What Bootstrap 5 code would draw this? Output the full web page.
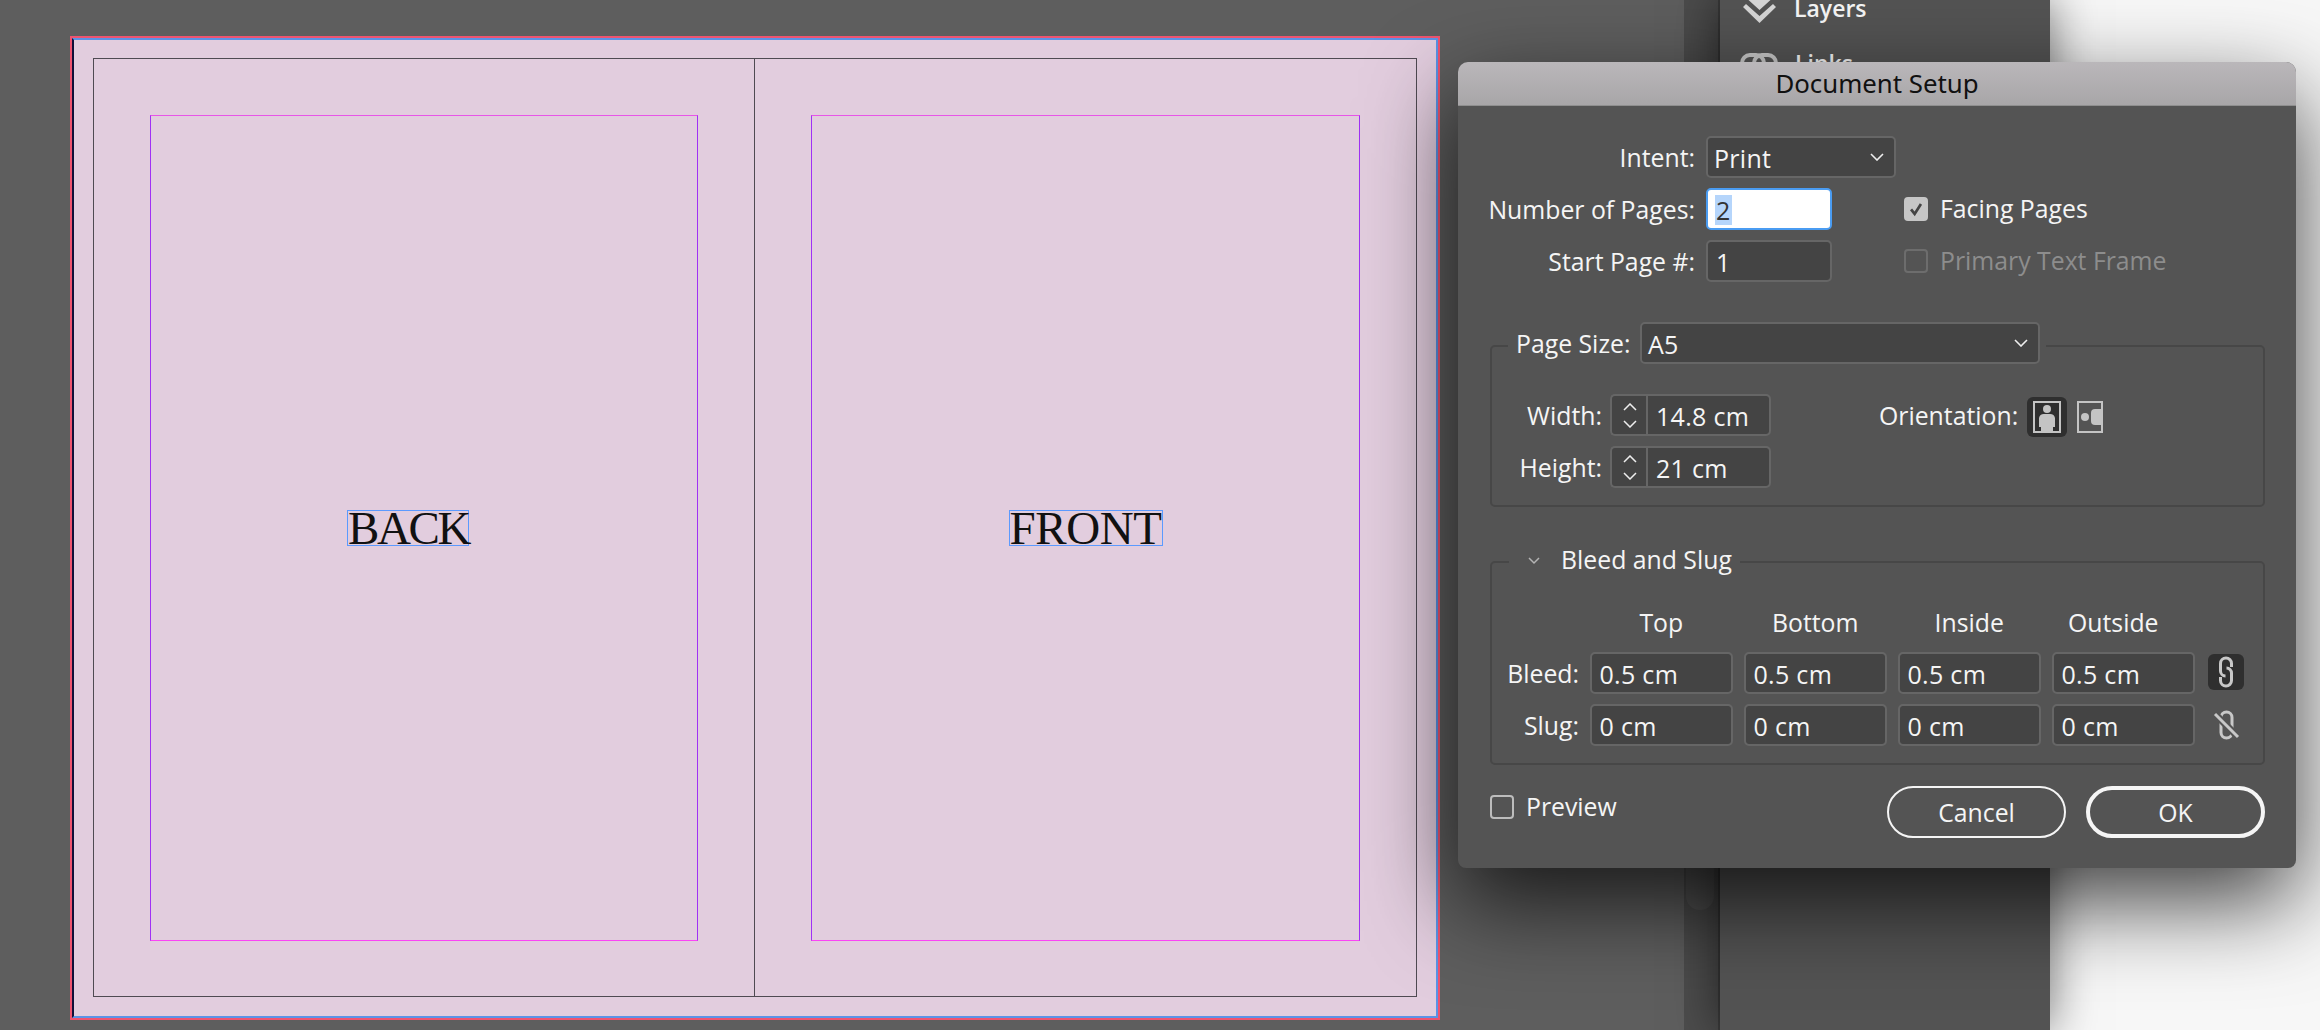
<!DOCTYPE html>
<html lang="en">
<head>
  <meta charset="UTF-8">
  <meta name="viewport" content="width=device-width, initial-scale=1.0">
  <title>Document Setup</title>
  <link href="https://cdn.jsdelivr.net/npm/bootstrap@5.3.0/dist/css/bootstrap.min.css" rel="stylesheet">
  <script src="https://cdn.jsdelivr.net/npm/bootstrap@5.3.0/dist/js/bootstrap.bundle.min.js"></script>
  <style>
    html, body { width: 2320px; height: 1030px; overflow: hidden; }
    body { background: #f7f7f7; font-family: "Open Sans", "Liberation Sans", sans-serif; font-size: 24.8px; color: #f5f5f5; position: relative; }

    /* document window */
    .doc-area { width: 1684px; height: 1030px; background: #5e5e5e; padding: 36px 0 0 70px; flex: none; }
    .spread-bleed { width: 1370px; height: 984px; border: 2px solid #ee5470; }
    .spread-trim { height: 100%; background: #e2cdde; border: 2px solid #5b93e6; border-left-color: #10103a; padding: 18px 19px 19px 19px; }
    .spread-pages { height: 100%; border: 1px solid #4f4a52; display: grid; grid-template-columns: 660px 662px; }
    .spread-half { padding: 56px 56px 55px 56px; }
    .spread-half + .spread-half { border-left: 1px solid #4f4a52; }
    .margin-box { height: 100%; border: 1px solid #a030f5; border-top-color: #e855e8; border-bottom-color: #fb45f5; }
    .text-frame { font-family: "Liberation Serif", serif; font-size: 47px; line-height: 34px; height: 36px; border: 1px solid #5b9aff; color: #111; white-space: nowrap; }
    .frame-back { width: 122px; margin-right: 32px; letter-spacing: -2.4px; }
    .frame-front { width: 154px; letter-spacing: -.4px; }

    /* right side panels */
    .scroll-strip { width: 36px; height: 1030px; background: #4c4c4c; border-right: 2px solid #3c3c3c; padding-top: 200px; flex: none; }
    .scroll-thumb { width: 28px; height: 710px; margin-left: 2px; background: #565656; border-radius: 0 0 14px 14px; }
    .side-panel { width: 330px; height: 1030px; background: #535353; box-shadow: 0 0 44px rgba(0, 0, 0, .55); padding: 0 0 0 23px; flex: none; position: relative; }
    .panel-row { height: 30px; gap: 18px; font-weight: 600; font-size: 23px; }
    .panel-row-layers { margin-top: -7px; }
    .panel-row-links { margin-top: 25px; margin-left: -3px; gap: 17px; }

    /* dialog */
    .setup-dialog { left: 1458px; top: 62px; width: 838px; height: 806px; background: #545454; border-radius: 10px 10px 8px 8px; box-shadow: 0 34px 90px rgba(0, 0, 0, .74); }
    .setup-title { height: 44px; background: linear-gradient(#bab7ba, #a8a6a8); border-bottom: 1px solid #8f8f8f; border-radius: 10px 10px 0 0; color: #111; font-family: "Noto Sans", sans-serif; font-size: 25.8px; line-height: 43px; }
    .setup-body { padding: 30px 31px 30px 32px; }
    .top-grid { display: grid; grid-template-columns: 216px 198px 1fr; grid-template-rows: repeat(3, 42px); row-gap: 10px; }
    .field-label { padding-right: 11px; white-space: nowrap; }
    .field-label, .row-label { padding-top: 2px; }

    .dlg-field.form-control, .dlg-select.form-select { height: 42px; min-height: 0; padding: 0 8px; background-color: #444; border: 2px solid #666; border-radius: 5px; color: #f5f5f5; font-size: 25px; letter-spacing: .3px; line-height: 40px; box-shadow: none; white-space: nowrap; }
    .dlg-select.form-select { padding-left: 6px; background-image: url("data:image/svg+xml,%3csvg xmlns='http://www.w3.org/2000/svg' viewBox='0 0 14 8'%3e%3cpath fill='none' stroke='%23eee' stroke-width='1.6' d='M1 1l6 6 6-6'/%3e%3c/svg%3e"); background-size: 14px 8px; background-position: right 10px center; }
    .w-intent { width: 190px; }
    .w-short { width: 126px; }
    .dlg-field.field-focus { background: #fff; border-color: #4a9cf2; color: #333; padding-left: 7px; }
    .sel-text { background: #b5d5fb; display: inline-block; line-height: 30px; padding: 0 1px; }

    .dlg-check.form-check-input { width: 24px; height: 24px; margin: 0; background-color: transparent; border: 2px solid #bdbdbd; border-radius: 4px; box-shadow: none; opacity: 1; flex: none; }
    .dlg-check.form-check-input:checked { background-color: #c6c6c6; border-color: #c6c6c6; background-size: 18px; background-image: url("data:image/svg+xml,%3csvg xmlns='http://www.w3.org/2000/svg' viewBox='0 0 20 20'%3e%3cpath fill='none' stroke='%23444' stroke-width='3' d='M4.5 10.5l4 5 7-11'/%3e%3c/svg%3e"); }
    .dlg-check.form-check-input:disabled { border-color: #6d6d6d; }
    .check-row { gap: 12px; }
    .muted-label { color: #8d8d8d; }

    .setup-group { border: 2px solid #474747; border-radius: 5px; }
    .group-size { margin-top: 63px; height: 162px; }
    .group-bleed { margin-top: 54px; height: 204px; }
    .group-legend { display: flex; width: fit-content; align-items: center; background: #545454; }
    .legend-size { margin: -25px 0 0 16px; height: 41px; padding: 0 6px 0 8px; gap: 9px; }
    .legend-size > span { width: 115px; white-space: nowrap; padding-top: 2px; }
    .w-pagesize { width: 400px; }
    .legend-bleed { margin: -17px 0 0 17px; height: 30px; padding: 0 8px 0 19px; gap: 21px; }
    .legend-bleed > span { margin-top: -2px; white-space: nowrap; }

    .size-rows { display: grid; grid-template-columns: 110px 161px; grid-template-rows: 42px 42px; column-gap: 8px; row-gap: 10px; margin-top: 31px; position: relative; }
    .spin-field { width: 161px; height: 42px; flex-wrap: nowrap; }
    .spin-box { width: 37px; background: #444; border: 2px solid #666; border-right: 0; border-radius: 5px 0 0 5px; gap: 9px; flex: none; }
    .spin-field .dlg-field.form-control { border-radius: 0 5px 5px 0; padding-left: 8px; margin-left: 0; }
    .orient-block { grid-column: 3; grid-row: 1; margin-left: 100px; gap: 9px; }
    .orient-block > span { padding-top: 2px; }
    .orient-on { width: 40px; height: 40px; margin-top: 4px; background: #2f2f2f; border-radius: 6px; }
    .orient-off { margin: 4px 0 0 1px; }

    .bleed-grid { display: grid; grid-template-columns: 87px repeat(4, 143.5px) 36px; grid-template-rows: 34px 42px 42px; column-gap: 10.5px; row-gap: 10px; margin-top: 32px; }
    .col-head { line-height: 28px; text-align: center; }
    .col-outside { padding-right: 20px; }
    .link-cell { width: 36px; margin-left: 2.5px; }
    .link-on { background: #2f2f2f; border-radius: 6px; height: 36px; margin-top: 2px; }

    .footer-row { margin-top: 21px; }
    .preview-row { margin-top: 2px; }
    .dlg-btn.btn { width: 179px; height: 52px; padding: 0; background: transparent; border: 2px solid #f5f5f5; color: #f5f5f5; font-size: 24.8px; line-height: 48px; }
    .dlg-btn.btn-default { border-width: 4px; line-height: 44px; }
    .btn-gap { gap: 20px; }
  </style>
</head>
<body class="d-flex">
  <!-- document window -->
  <div class="doc-area">
    <div class="spread-bleed">
      <div class="spread-trim">
        <div class="spread-pages">
          <div class="spread-half">
            <div class="margin-box d-flex align-items-center justify-content-center">
              <div class="text-frame frame-back">BACK</div>
            </div>
          </div>
          <div class="spread-half">
            <div class="margin-box d-flex align-items-center justify-content-center">
              <div class="text-frame frame-front">FRONT</div>
            </div>
          </div>
        </div>
      </div>
    </div>
  </div>

  <div class="scroll-strip"><div class="scroll-thumb"></div></div>

  <!-- panels -->
  <div class="side-panel">
    <div class="panel-row panel-row-layers d-flex align-items-center">
      <svg width="33" height="32" viewBox="0 0 33 32"><path fill="#d6d6d6" d="M0 3 16.5-6 33 3 16.5 18zM0 15l3-3 13.5 12L30 12l3 3-16.5 16z"/></svg>
      <span>Layers</span>
    </div>
    <div class="panel-row panel-row-links d-flex align-items-center">
      <svg width="38" height="24" viewBox="0 0 38 24" fill="none" stroke="#c8c8c8" stroke-width="4"><rect x="2" y="4" width="22" height="16" rx="8"/><rect x="14" y="4" width="22" height="16" rx="8"/></svg>
      <span>Links</span>
    </div>
  </div>

  <!-- Document Setup dialog -->
  <div class="setup-dialog position-absolute">
    <div class="setup-title text-center">Document Setup</div>
    <div class="setup-body">
      <div class="top-grid">
        <div class="field-label d-flex align-items-center justify-content-end">Intent:</div>
        <div class="form-select dlg-select w-intent">Print</div>
        <div></div>

        <div class="field-label d-flex align-items-center justify-content-end">Number of Pages:</div>
        <div class="form-control dlg-field field-focus w-short"><span class="sel-text">2</span></div>
        <div class="d-flex align-items-center check-row">
          <input class="form-check-input dlg-check" type="checkbox" checked>
          <span>Facing Pages</span>
        </div>

        <div class="field-label d-flex align-items-center justify-content-end">Start Page #:</div>
        <div class="form-control dlg-field w-short">1</div>
        <div class="d-flex align-items-center check-row">
          <input class="form-check-input dlg-check" type="checkbox" disabled>
          <span class="muted-label">Primary Text Frame</span>
        </div>
      </div>

      <div class="setup-group group-size">
        <div class="group-legend legend-size">
          <span>Page Size:</span>
          <div class="form-select dlg-select w-pagesize">A5</div>
        </div>
        <div class="size-rows">
          <div class="row-label d-flex align-items-center justify-content-end">Width:</div>
          <div class="input-group spin-field">
            <div class="spin-box d-flex flex-column align-items-center justify-content-center">
              <svg width="14" height="8" viewBox="0 0 14 8" fill="none" stroke="#eee" stroke-width="1.5"><path d="M1 7l6-6 6 6"/></svg>
              <svg width="14" height="8" viewBox="0 0 14 8" fill="none" stroke="#eee" stroke-width="1.5"><path d="M1 1l6 6 6-6"/></svg>
            </div>
            <div class="form-control dlg-field">14.8 cm</div>
          </div>
          <div class="orient-block d-flex align-items-center">
            <span class="text-nowrap">Orientation:</span>
            <div class="orient-on d-flex align-items-center justify-content-center">
              <svg width="28" height="32" viewBox="0 0 28 32"><rect x="1" y="1" width="26" height="30" fill="none" stroke="#c4c4c4" stroke-width="2"/><circle cx="14" cy="8" r="4" fill="#c4c4c4"/><path fill="#c4c4c4" d="M6 17a5 5 0 0 1 5-4h6a5 5 0 0 1 5 4v9h-2v4H8v-4H6z"/></svg>
            </div>
            <svg class="orient-off" width="26" height="32" viewBox="0 0 26 32"><rect x="1" y="1" width="24" height="30" fill="none" stroke="#c4c4c4" stroke-width="2"/><circle cx="8" cy="16" r="4" fill="#c4c4c4"/><path fill="#c4c4c4" d="M25 8H18a4 4 0 0 0-4 4v8a4 4 0 0 0 4 4h7z"/></svg>
          </div>
          <div class="row-label d-flex align-items-center justify-content-end">Height:</div>
          <div class="input-group spin-field">
            <div class="spin-box d-flex flex-column align-items-center justify-content-center">
              <svg width="14" height="8" viewBox="0 0 14 8" fill="none" stroke="#eee" stroke-width="1.5"><path d="M1 7l6-6 6 6"/></svg>
              <svg width="14" height="8" viewBox="0 0 14 8" fill="none" stroke="#eee" stroke-width="1.5"><path d="M1 1l6 6 6-6"/></svg>
            </div>
            <div class="form-control dlg-field">21 cm</div>
          </div>
        </div>
      </div>

      <div class="setup-group group-bleed">
        <div class="group-legend legend-bleed">
          <svg width="12" height="8" viewBox="0 0 12 8" fill="none" stroke="#b4b4b4" stroke-width="1.5"><path d="M1 1l5 5 5-5"/></svg>
          <span>Bleed and Slug</span>
        </div>
        <div class="bleed-grid">
          <div></div>
          <div class="col-head">Top</div>
          <div class="col-head">Bottom</div>
          <div class="col-head">Inside</div>
          <div class="col-head col-outside">Outside</div>
          <div></div>

          <div class="row-label d-flex align-items-center justify-content-end">Bleed:</div>
          <div class="form-control dlg-field">0.5 cm</div>
          <div class="form-control dlg-field">0.5 cm</div>
          <div class="form-control dlg-field">0.5 cm</div>
          <div class="form-control dlg-field">0.5 cm</div>
          <div class="link-cell link-on d-flex align-items-center justify-content-center">
            <svg width="36" height="36" viewBox="0 0 36 36" fill="none" stroke="#c8c8c8" stroke-width="3"><path d="M23.5 13V9.5a5.5 5.5 0 0 0-11 0V17a5 5 0 0 0 5 5"/><path d="M12.5 23v3.5a5.5 5.5 0 0 0 11 0V19a5 5 0 0 0-5-5"/></svg>
          </div>

          <div class="row-label d-flex align-items-center justify-content-end">Slug:</div>
          <div class="form-control dlg-field">0 cm</div>
          <div class="form-control dlg-field">0 cm</div>
          <div class="form-control dlg-field">0 cm</div>
          <div class="form-control dlg-field">0 cm</div>
          <div class="link-cell d-flex align-items-center justify-content-center">
            <svg width="36" height="36" viewBox="0 0 36 36" fill="none"><rect x="13" y="5" width="11" height="26" rx="5.5" stroke="#c8c8c8" stroke-width="3"/><path d="M7 7l23 23" stroke="#545454" stroke-width="7"/><path d="M7 7l23 23" stroke="#c8c8c8" stroke-width="3"/></svg>
          </div>
        </div>
      </div>

      <div class="footer-row d-flex justify-content-between align-items-start">
        <div class="preview-row d-flex align-items-center check-row">
          <input class="form-check-input dlg-check" type="checkbox">
          <span>Preview</span>
        </div>
        <div class="d-flex btn-gap">
          <button class="btn rounded-pill dlg-btn">Cancel</button>
          <button class="btn rounded-pill dlg-btn btn-default">OK</button>
        </div>
      </div>
    </div>
  </div>
</body>
</html>
